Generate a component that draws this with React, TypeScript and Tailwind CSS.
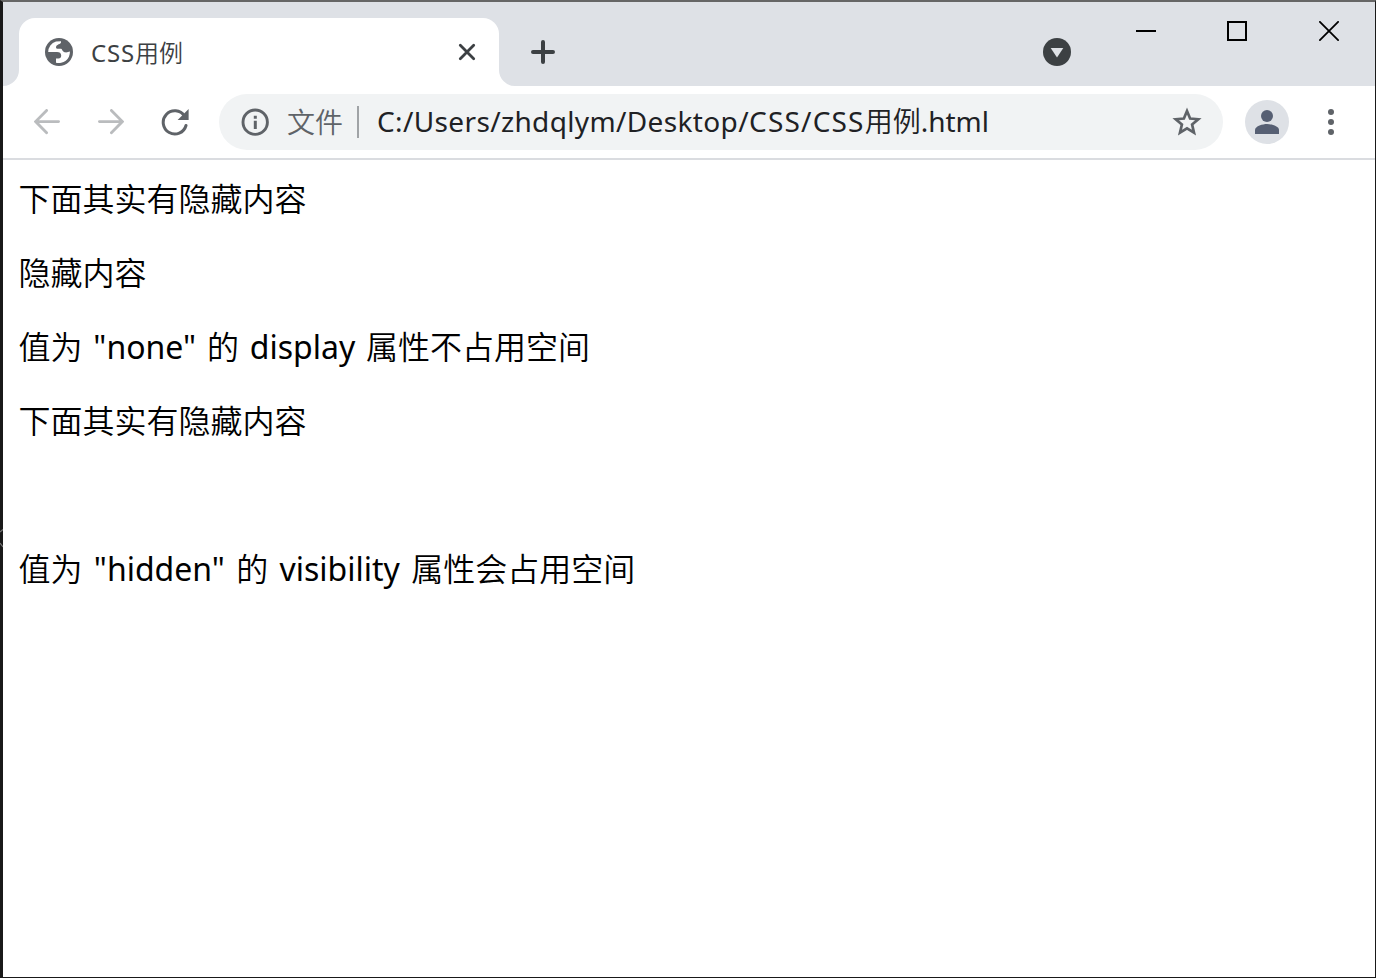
import React from "react";

const bodyFont = "font-['Noto_Sans','Noto_Sans_CJK_SC',sans-serif] font-[350]";

function Globe() {
  return (
    <svg className="h-7 w-7 shrink-0" viewBox="0 0 28 28">
      <circle cx="14" cy="14" r="14" fill="#5f6368" />
      <path
        fill="#fff"
        d="M3.2 14A11 11 0 0 1 11 3.4L16 3.2V4.2C16 5.5 14.8 5.7 13.6 6.2C12 7 11 8 11 9.2C11 10.3 11.8 10.8 13 10.8H16C17 10.8 17 12.2 17.8 13C19 14.2 20 14.4 21 14.4C22.6 14.4 23.5 13.6 24.9 13.6A11 11 0 0 1 11 24.7V20.5H13.5C15.2 20.5 16.2 19.2 16.2 17.5C16.2 15 14.5 14 12 14Z"
      />
    </svg>
  );
}

function TabStrip() {
  return (
    <div className="flex h-[84px] shrink-0 bg-[#dee1e6]">
      <div className="flex w-4 items-end">
        <svg className="h-4 w-4" viewBox="0 0 16 16">
          <path d="M0 16A16 16 0 0 0 16 0V16Z" fill="#fff" />
        </svg>
      </div>
      <div className="mt-4 flex h-[68px] w-[480px] items-center rounded-t-2xl bg-white pl-[26px] pr-[23px]">
        <Globe />
        <span className="ml-[18px] flex-1 whitespace-nowrap pt-0.5 text-2xl leading-8 text-[#3c4043]"><span className="font-normal tracking-[0.8px]">CSS</span>用例</span>
        <svg className="h-[18px] w-[18px]" viewBox="0 0 18 18" stroke="#3c4043" strokeWidth="2.8" strokeLinecap="round">
          <path d="M2.3 2.3L15.7 15.7M15.7 2.3L2.3 15.7" />
        </svg>
      </div>
      <div className="flex w-4 items-end">
        <svg className="h-4 w-4" viewBox="0 0 16 16">
          <path d="M0 0A16 16 0 0 0 16 16H0Z" fill="#fff" />
        </svg>
      </div>
      <svg className="ml-4 mt-[38px] h-6 w-6" viewBox="0 0 24 24" stroke="#3c4043" strokeWidth="4" strokeLinecap="round">
        <path d="M12 2V22M2 12H22" />
      </svg>
      <div className="flex-1" />
      <svg className="mr-[65px] mt-9 h-7 w-7" viewBox="0 0 28 28">
        <circle cx="14" cy="14" r="14" fill="#3c4043" />
        <path d="M7.7 10H20.3L14 19.6Z" fill="#dee1e6" />
      </svg>
      <div className="mr-9 mt-[19px] flex gap-[71px]">
        <svg className="h-5 w-5" viewBox="0 0 20 20">
          <path d="M0 9H20V11H0Z" />
        </svg>
        <svg className="h-5 w-5" viewBox="0 0 20 20" fill="none" stroke="#000" strokeWidth="2">
          <path d="M1 1H19V19H1Z" />
        </svg>
        <svg className="ml-px h-5 w-5" viewBox="0 0 20 20" stroke="#000" strokeWidth="1.8">
          <path d="M0.3 0.3L19.7 19.7M19.7 0.3L0.3 19.7" />
        </svg>
      </div>
    </div>
  );
}

function Toolbar() {
  return (
    <div className="flex h-[74px] shrink-0 items-center border-b-2 border-[#dadce0] bg-white pl-[31px] pr-[41px]">
      <svg className="h-[26px] w-[26px]" viewBox="0 0 26 26" fill="none" stroke="#babcbe" strokeWidth="2.8" strokeLinecap="round">
        <path d="M24.6 12.6H2M12.6 1.4L1.6 12.6L12.6 23.8" />
      </svg>
      <svg className="ml-[38px] h-[26px] w-[26px]" viewBox="0 0 26 26" fill="none" stroke="#babcbe" strokeWidth="2.8" strokeLinecap="round">
        <path d="M1.4 12.6H24M13.4 1.4L24.4 12.6L13.4 23.8" />
      </svg>
      <svg className="ml-[37px] h-7 w-7" viewBox="0 0 28 28" fill="none">
        <path d="M23.5 8A11.6 11.6 0 1 0 25 17.5" stroke="#5f6368" strokeWidth="3" strokeLinecap="round" />
        <path d="M27.6 1V12H16.6Z" fill="#5f6368" />
      </svg>
      <div className="ml-[30px] flex h-14 w-[1004px] items-center rounded-full bg-[#f1f3f4] pl-[22px] pr-[21px] text-[28px] leading-10">
        <svg className="h-7 w-7 shrink-0" viewBox="0 0 28 28">
          <circle cx="14.2" cy="14.2" r="12.2" fill="none" stroke="#5f6368" strokeWidth="2.9" />
          <path d="M12.8 7.8H15.8V10.8H12.8ZM12.8 12.8H15.8V21H12.8Z" fill="#5f6368" />
        </svg>
        <span className="ml-[18px] whitespace-nowrap text-[#5f6368]">文件</span>
        <div className="ml-3.5 h-8 w-0.5 bg-[#a0a3a6]" />
        <span className="ml-[18px] flex-1 whitespace-nowrap pb-0.5 text-[#202124]">
          <span className="font-normal tracking-[0.36px]">C:/Users/zhdqlym/Desktop/</span>
          <span className="font-normal tracking-[1.2px]">CSS/CSS</span>用例<span className="font-normal">.html</span>
        </span>
        <svg className="h-[30px] w-[30px]" viewBox="0 0 30 30" fill="none" stroke="#5f6368" strokeWidth="2.7">
          <path d="M15 4L18.1 11.5L26.3 12.2L20.1 17.6L22 25.6L15 21.3L8 25.6L9.9 17.6L3.7 12.2L11.9 11.5Z" />
        </svg>
      </div>
      <svg className="ml-[22px] h-11 w-11" viewBox="0 0 44 44">
        <circle cx="22" cy="22" r="22" fill="#dee1e6" />
        <circle cx="22" cy="16" r="6" fill="#565f73" />
        <path d="M10 34V30C10 26 18 24 22 24S34 26 34 30V34Z" fill="#565f73" />
      </svg>
      <div className="ml-auto flex flex-col gap-1">
        <div className="h-1.5 w-1.5 rounded-full bg-[#5f6368]" />
        <div className="h-1.5 w-1.5 rounded-full bg-[#5f6368]" />
        <div className="h-1.5 w-1.5 rounded-full bg-[#5f6368]" />
      </div>
    </div>
  );
}

export default function App() {
  return (
    <div className={`relative flex h-[978px] w-[1376px] flex-col border-b border-l-[3px] border-r border-t-2 border-b-[#191919] border-l-[#191919] border-r-[#191919] border-t-[#666] bg-white ${bodyFont}`}>
      <TabStrip />
      <Toolbar />
      <main className="flex flex-col gap-8 whitespace-nowrap px-[15.5px] pt-[18px] text-[32px] leading-[42px] text-black">
        <p>下面其实有隐藏内容</p>
        <p>隐藏内容</p>
        <p className="[word-spacing:2.5px]">值为 <span className="font-normal">"none"</span> 的 <span className="font-normal">display</span> 属性不占用空间</p>
        <p>下面其实有隐藏内容</p>
        <p className="invisible">隐藏内容</p>
        <p className="[word-spacing:3px]">值为 <span className="font-normal">"hidden"</span> 的 <span className="font-normal">visibility</span> 属性会占用空间</p>
      </main>
      <svg className="absolute -left-[3px] top-[526px] h-5 w-[3px]" viewBox="0 0 3 20" fill="none" stroke="#777" strokeWidth="1.2">
        <path d="M0 4L3 1.5M0 15L3 19" />
      </svg>
    </div>
  );
}
